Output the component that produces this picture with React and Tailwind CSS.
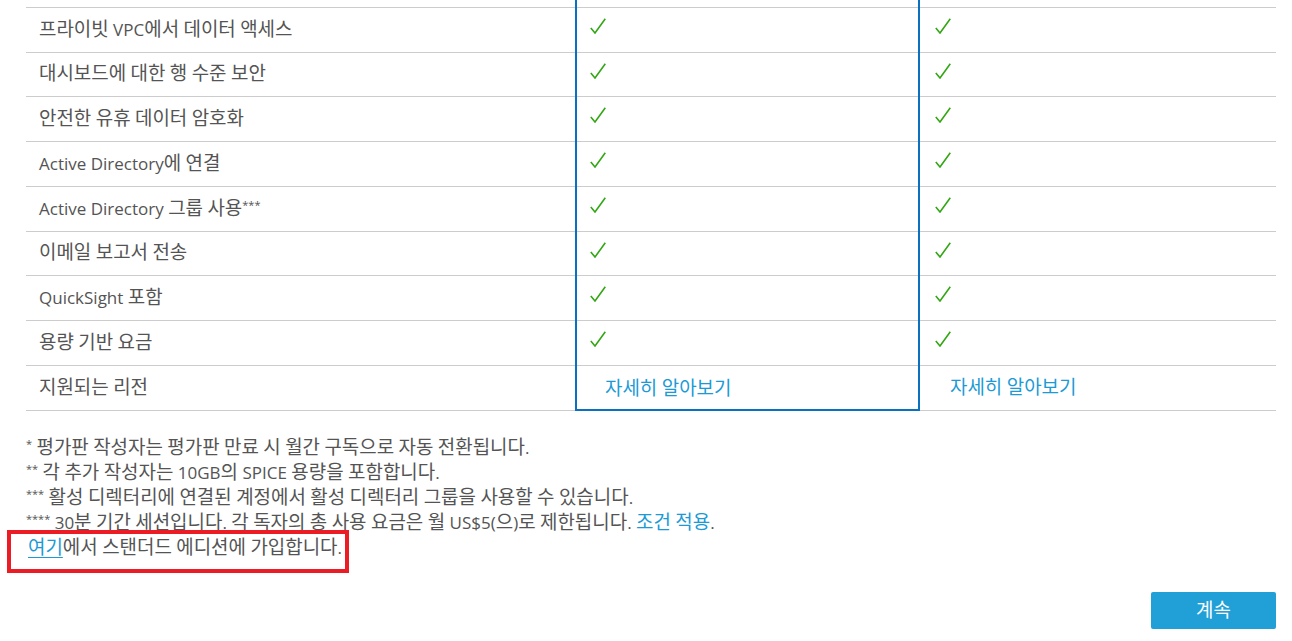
import React from "react";

const HANGUL = /([\uAC00-\uD7A3\u3131-\u318E]+)/;

function K({ children }) {
  const parts = String(children).split(HANGUL);
  return (
    <span>
      {parts.map((p, i) =>
        HANGUL.test(p) ? (
          <span key={i} className="text-[1.115em]">
            {p}
          </span>
        ) : (
          <React.Fragment key={i}>{p}</React.Fragment>
        )
      )}
    </span>
  );
}

const rows = [
  { label: "프라이빗 VPC에서 데이터 액세스", h: "h-[45px]" },
  { label: "대시보드에 대한 행 수준 보안", h: "h-[44px]" },
  { label: "안전한 유휴 데이터 암호화", h: "h-[45px]" },
  { label: "Active Directory에 연결", h: "h-[45px]" },
  { label: "Active Directory 그룹 사용", sup: "***", h: "h-[45px]" },
  { label: "이메일 보고서 전송", h: "h-[44px]" },
  { label: "QuickSight 포함", h: "h-[45px]" },
  { label: "용량 기반 요금", h: "h-[45px]" },
];

function Check() {
  return (
    <svg width="16" height="16" viewBox="0 0 16 16" className="block">
      <polyline
        points="0.8,10 5,15 15.3,0.8"
        fill="none"
        stroke="#33a615"
        strokeWidth="1.6"
      />
    </svg>
  );
}

function Star({ n }) {
  return <span className="text-[11px] leading-none relative top-[-6px]">{n}</span>;
}

const font = { fontFamily: '"Open Sans", "Noto Sans CJK KR", sans-serif' };

export default function App() {
  return (
    <div
      className="w-[1292px] h-[641px] bg-white overflow-hidden text-[#545454] text-[17px] leading-[26px] relative"
      style={font}
    >
      <div className="ml-[26px] w-[1250px] flex">
        {/* label column */}
        <div className="w-[549px] flex flex-col">
          <div className="h-[8px] border-b border-[#cccccc]" />
          {rows.map((r, i) => (
            <div
              key={i}
              className={`${r.h} border-b border-[#cccccc] flex items-center pl-[13px] pb-[2px]`}
            >
              <span>
                <K>{r.label}</K>
                {r.sup && <Star n={r.sup} />}
              </span>
            </div>
          ))}
          <div className="h-[45px] border-b border-[#cccccc] flex items-center pl-[13px] pb-[2px]">
            <K>지원되는 리전</K>
          </div>
        </div>
        {/* highlighted column */}
        <div className="w-[345px] flex flex-col border-x-2 border-b-2 border-[#0a71c0] self-start">
          <div className="h-[8px] border-b border-[#cccccc]" />
          {rows.map((r, i) => (
            <div
              key={i}
              className={`${r.h} border-b border-[#cccccc] flex items-start pl-[13px] pt-[10px]`}
            >
              <Check />
            </div>
          ))}
          <div className="h-[43px] flex items-center pl-[28px] pt-[1px]">
            <a className="text-[#1b9ad6] cursor-pointer">
              <K>자세히 알아보기</K>
            </a>
          </div>
        </div>
        {/* third column */}
        <div className="w-[356px] flex flex-col">
          <div className="h-[8px] border-b border-[#cccccc]" />
          {rows.map((r, i) => (
            <div
              key={i}
              className={`${r.h} border-b border-[#cccccc] flex items-start pl-[15px] pt-[10px]`}
            >
              <Check />
            </div>
          ))}
          <div className="h-[45px] border-b border-[#cccccc] flex items-center pl-[30px] pb-[1px]">
            <a className="text-[#1b9ad6] cursor-pointer">
              <K>자세히 알아보기</K>
            </a>
          </div>
        </div>
      </div>

      {/* footnotes */}
      <div className="ml-[26px] mt-[24px] leading-[25px] text-[17px]">
        <p className="h-[25px]">
          <Star n="*" /> <K>평가판 작성자는 평가판 만료 시 월간 구독으로 자동 전환됩니다.</K>
        </p>
        <p className="h-[25px]">
          <Star n="**" /> <K>각 추가 작성자는 10GB의 SPICE 용량을 포함합니다.</K>
        </p>
        <p className="h-[25px]">
          <Star n="***" /> <K>활성 디렉터리에 연결된 계정에서 활성 디렉터리 그룹을 사용할 수 있습니다.</K>
        </p>
        <p className="h-[25px]">
          <Star n="****" /> <K>30분 기간 세션입니다. 각 독자의 총 사용 요금은 월 US$5(으)로 제한됩니다.</K>{" "}
          <a className="text-[#1b9ad6] cursor-pointer">
            <K>조건 적용</K>
          </a>
          .
        </p>
        <p className="h-[25px] relative pl-[2px]">
          <a className="text-[#1b9ad6] underline underline-offset-[3px] cursor-pointer">
            <K>여기</K>
          </a>
          <K>에서 스탠더드 에디션에 가입합니다.</K>
          <span className="absolute left-[-19px] top-[-5px] w-[342px] h-[43px] border-4 border-[#ec1c24] pointer-events-none" />
        </p>
      </div>

      {/* button */}
      <div className="w-[1276px] flex justify-end mt-[32px]">
        <button className="w-[125px] h-[37px] rounded-[2px] bg-[#21a0d7] text-white text-[17px] flex items-center justify-center">
          <K>계속</K>
        </button>
      </div>
    </div>
  );
}
